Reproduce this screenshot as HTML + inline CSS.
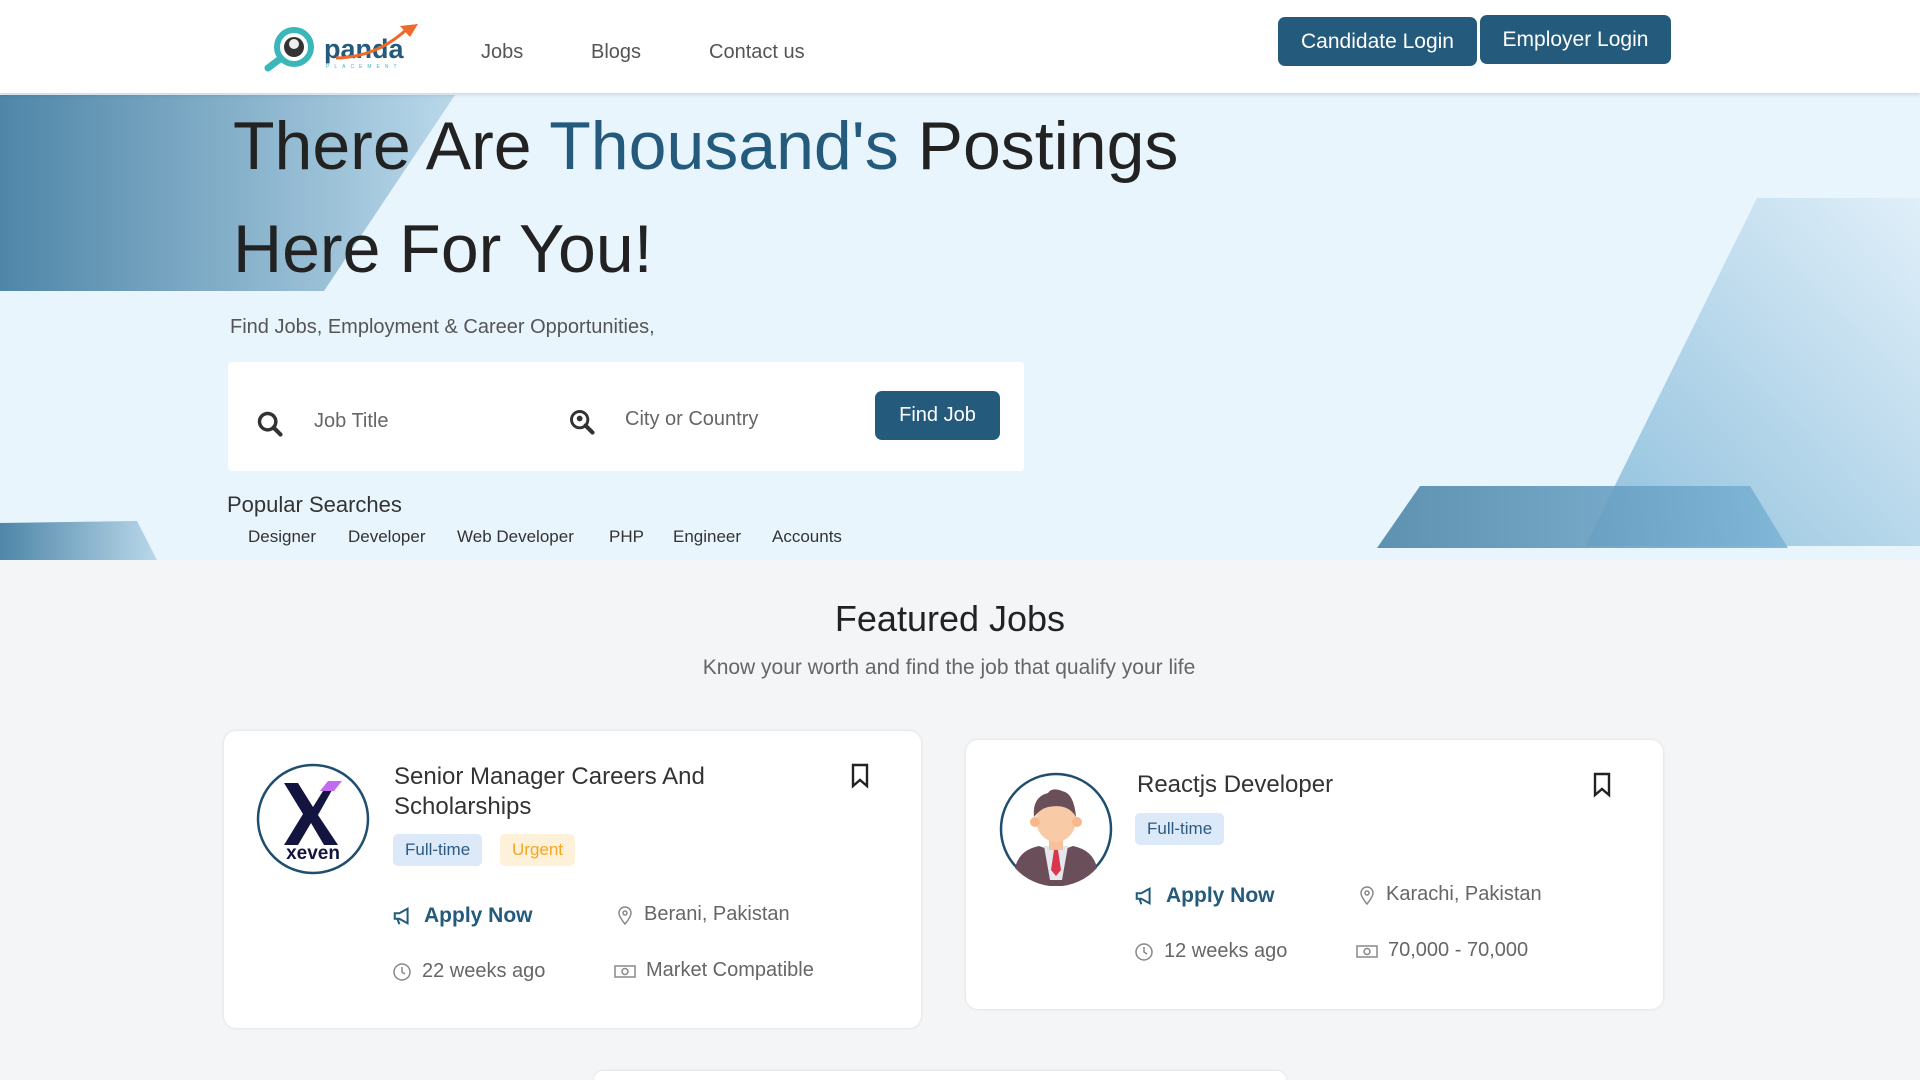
<!DOCTYPE html>
<html><head><meta charset="utf-8"><style>
*{margin:0;padding:0;box-sizing:border-box}
html,body{width:1920px;height:1080px;overflow:hidden}
body{background:#f4f5f7;font-family:"Liberation Sans",sans-serif;color:#222;position:relative}
.abs{position:absolute}
header{position:absolute;left:0;top:0;width:1920px;height:93px;background:#fff;box-shadow:0 2px 4px rgba(0,0,0,.12);z-index:5}
.nav{font-size:20px;color:#555;top:41px}
.btn{background:#245a7c;color:#fff;font-size:21px;border-radius:7px;display:flex;align-items:center;justify-content:center}
.hero{position:absolute;left:0;top:93px;width:1920px;height:467px;background:#e9f5fd;overflow:hidden}
h1{font-weight:400;font-size:68px;color:#222;position:absolute;left:233px;white-space:nowrap}
.card{position:absolute;background:#fff;border-radius:12px;box-shadow:0 0 3px rgba(0,0,0,.12)}
.tag{position:absolute;height:32px;border-radius:5px;font-size:17px;display:flex;align-items:center;padding:0 12px}
.meta{position:absolute;font-size:20px;color:#666;white-space:nowrap;display:flex;align-items:center;gap:10px}
.ap{color:#245a7c;font-weight:700;font-size:21px}
.pop{font-size:17px;color:#333;top:527px}
</style></head><body>
<header>
<svg class="abs" style="left:258px;top:22px" width="165" height="50" viewBox="0 0 165 50">
<circle cx="36" cy="25" r="17" fill="#fff" stroke="#3bb7b9" stroke-width="6"/>
<path d="M22 37 L10 46" stroke="#3bb7b9" stroke-width="7" stroke-linecap="round"/>
<circle cx="36" cy="25" r="10" fill="#333"/><circle cx="36" cy="22" r="5" fill="#eee"/>
<text x="66" y="36" font-family="Liberation Sans" font-weight="700" font-size="27" fill="#245a7c">panda</text>
<path d="M78 36 Q120 35 150 6" stroke="#ef6a2a" stroke-width="3" fill="none"/><path d="M142 4 L160 2 L152 15Z" fill="#ef6a2a"/>
<text x="68" y="46" font-size="5" letter-spacing="5" fill="#3bb7b9">PLACEMENT</text>
</svg>
<div class="abs nav" style="left:481px">Jobs</div>
<div class="abs nav" style="left:591px">Blogs</div>
<div class="abs nav" style="left:709px">Contact us</div>
<div class="abs btn" style="left:1278px;top:17px;width:199px;height:49px">Candidate Login</div>
<div class="abs btn" style="left:1480px;top:15px;width:191px;height:49px">Employer Login</div>
</header>
<div class="hero">
<svg class="abs" style="left:0;top:0" width="1920" height="467">
<defs>
<linearGradient id="g1" x1="0" x2="1"><stop offset="0" stop-color="#4f86a8"/><stop offset="1" stop-color="#b9d8ea"/></linearGradient>
<linearGradient id="g2" x1="0" y1="1" x2="1" y2="0"><stop offset="0" stop-color="#8fc0dd"/><stop offset="1" stop-color="#e0eff9"/></linearGradient>
<linearGradient id="g3" x1="0" x2="1"><stop offset="0" stop-color="#4f86a8"/><stop offset="1" stop-color="#7cb4d6"/></linearGradient>
</defs>
<polygon points="0,2 455,2 324,198 0,198" fill="url(#g1)"/>
<polygon points="1757,105 1920,105 1920,453 1585,453" fill="url(#g2)"/>
<polygon points="1420,393 1750,393 1788,455 1377,455" fill="url(#g3)" opacity=".9"/>
<polygon points="0,430 137,428 157,467 0,467" fill="url(#g1)"/>
</svg>
<h1 style="top:14px">There Are <span style="color:#245a7c">Thousand's</span> Postings</h1>
<h1 style="top:117px">Here For You!</h1>
<div class="abs" style="left:230px;top:223px;font-size:20px;color:#555">Find Jobs, Employment &amp; Career Opportunities,</div>
<div class="abs" style="left:228px;top:269px;width:796px;height:109px;background:#fff;border-radius:4px">
<svg class="abs" style="left:28px;top:48px" width="28" height="28" viewBox="0 0 24 24"><circle cx="10" cy="10" r="7" fill="none" stroke="#333" stroke-width="3"/><path d="M15 15l6 6" stroke="#333" stroke-width="3.5" stroke-linecap="round"/></svg>
<div class="abs" style="left:86px;top:48px;font-size:20px;color:#666">Job Title</div>
<svg class="abs" style="left:340px;top:46px" width="28" height="28" viewBox="0 0 24 24"><circle cx="10" cy="10" r="7" fill="none" stroke="#333" stroke-width="2.5"/><circle cx="10" cy="9" r="2.5" fill="#333"/><path d="M15 15l6 6" stroke="#333" stroke-width="3.5" stroke-linecap="round"/></svg>
<div class="abs" style="left:397px;top:46px;font-size:20px;color:#666">City or Country</div>
<div class="abs btn" style="left:647px;top:29px;width:125px;height:49px;font-size:20px">Find Job</div>
</div>
<div class="abs" style="left:227px;top:399px;font-size:22px;color:#333">Popular Searches</div>
</div>
<div class="abs pop" style="left:248px">Designer</div>
<div class="abs pop" style="left:348px">Developer</div>
<div class="abs pop" style="left:457px">Web Developer</div>
<div class="abs pop" style="left:609px">PHP</div>
<div class="abs pop" style="left:673px">Engineer</div>
<div class="abs pop" style="left:772px">Accounts</div>

<div class="abs" style="left:0;width:1900px;text-align:center;top:598px;font-size:36px;color:#222">Featured Jobs</div>
<div class="abs" style="left:0;width:1898px;text-align:center;top:656px;font-size:21px;color:#666">Know your worth and find the job that qualify your life</div>

<div class="card" style="left:224px;top:731px;width:697px;height:297px">
<svg class="abs" style="left:32px;top:32px" width="114" height="112" viewBox="0 0 114 112"><ellipse cx="57" cy="56" rx="55" ry="54" fill="#fff" stroke="#1f4e6e" stroke-width="2.5"/>
<path d="M28 20h14l15 24 15-24h8L62 52l20 30H68L55 60 42 82H28l19-31z" fill="#131540"/><path d="M72 18h14l-8 10H64z" fill="#c46af0"/>
<text x="57" y="96" text-anchor="middle" font-family="Liberation Sans" font-size="19" font-weight="700" fill="#131540">xeven</text></svg>
<div class="abs" style="left:170px;top:31px;font-size:24px;color:#333;line-height:30px">Senior Manager Careers And<br>Scholarships</div>
<svg class="abs" style="left:626px;top:32px" width="20" height="26" viewBox="0 0 20 26"><path d="M3 2h14v21l-7-6-7 6z" fill="none" stroke="#222" stroke-width="2.4"/></svg>
<div class="tag" style="left:169px;top:103px;background:#dce9f8;color:#2c5a82">Full-time</div>
<div class="tag" style="left:276px;top:103px;background:#fdf1d9;color:#f5a623">Urgent</div>
<div class="meta ap" style="left:168px;top:173px"><svg width="22" height="22" viewBox="0 0 24 24"><path d="M3 9h5l9-5v16l-9-5H3z M6 15l2 6" fill="none" stroke="#245a7c" stroke-width="2.2"/></svg>Apply Now</div>
<div class="meta" style="left:392px;top:172px"><svg width="18" height="20" viewBox="0 0 18 20"><path d="M9 19s-6-7-6-11a6 6 0 0 1 12 0c0 4-6 11-6 11z" fill="none" stroke="#888" stroke-width="1.5"/><circle cx="9" cy="8" r="2" fill="none" stroke="#888" stroke-width="1.5"/></svg>Berani, Pakistan</div>
<div class="meta" style="left:168px;top:229px"><svg width="20" height="20" viewBox="0 0 20 20"><circle cx="10" cy="10" r="8" fill="none" stroke="#888" stroke-width="1.5"/><path d="M10 5v5l3 2" fill="none" stroke="#888" stroke-width="1.5"/></svg>22 weeks ago</div>
<div class="meta" style="left:390px;top:228px"><svg width="22" height="16" viewBox="0 0 22 16"><rect x="1" y="3" width="20" height="11" fill="none" stroke="#888" stroke-width="1.5"/><circle cx="11" cy="8.5" r="3" fill="none" stroke="#888" stroke-width="1.5"/></svg>Market Compatible</div>
</div>

<div class="card" style="left:966px;top:740px;width:697px;height:269px">
<svg class="abs" style="left:33px;top:32px" width="114" height="114" viewBox="0 0 114 114"><circle cx="57" cy="57" r="55" fill="#fff" stroke="#1f4e6e" stroke-width="2.5"/>
<path d="M16 96q4-18 24-22l17 6 17-6q20 4 24 22a55 55 0 0 1-82 0z" fill="#6a4f5a"/><path d="M45 74h24l-6 34h-12z" fill="#e6e6ee"/><path d="M55 78h4l3 20-5 6-5-6z" fill="#d8364b"/>
<rect x="50" y="60" width="14" height="18" fill="#f7c09a"/><ellipse cx="57" cy="48" rx="20" ry="22" fill="#f9caa6"/><circle cx="36" cy="50" r="5" fill="#f7b88c"/><circle cx="78" cy="50" r="5" fill="#f7b88c"/>
<path d="M35 45q-2-20 14-24 4-6 14-2 12 2 14 26-8-14-28-10-8 2-14 10z" fill="#6a4f5a"/></svg>
<div class="abs" style="left:171px;top:31px;font-size:24px;color:#333">Reactjs Developer</div>
<svg class="abs" style="left:626px;top:32px" width="20" height="26" viewBox="0 0 20 26"><path d="M3 2h14v21l-7-6-7 6z" fill="none" stroke="#222" stroke-width="2.4"/></svg>
<div class="tag" style="left:169px;top:73px;background:#dce9f8;color:#2c5a82">Full-time</div>
<div class="meta ap" style="left:168px;top:144px"><svg width="22" height="22" viewBox="0 0 24 24"><path d="M3 9h5l9-5v16l-9-5H3z M6 15l2 6" fill="none" stroke="#245a7c" stroke-width="2.2"/></svg>Apply Now</div>
<div class="meta" style="left:392px;top:143px"><svg width="18" height="20" viewBox="0 0 18 20"><path d="M9 19s-6-7-6-11a6 6 0 0 1 12 0c0 4-6 11-6 11z" fill="none" stroke="#888" stroke-width="1.5"/><circle cx="9" cy="8" r="2" fill="none" stroke="#888" stroke-width="1.5"/></svg>Karachi, Pakistan</div>
<div class="meta" style="left:168px;top:200px"><svg width="20" height="20" viewBox="0 0 20 20"><circle cx="10" cy="10" r="8" fill="none" stroke="#888" stroke-width="1.5"/><path d="M10 5v5l3 2" fill="none" stroke="#888" stroke-width="1.5"/></svg>12 weeks ago</div>
<div class="meta" style="left:390px;top:199px"><svg width="22" height="16" viewBox="0 0 22 16"><rect x="1" y="3" width="20" height="11" fill="none" stroke="#888" stroke-width="1.5"/><circle cx="11" cy="8.5" r="3" fill="none" stroke="#888" stroke-width="1.5"/></svg>70,000 - 70,000</div>
</div>

<div class="card" style="left:594px;top:1071px;width:692px;height:9px;border-radius:12px 12px 0 0"></div>
</body></html>
